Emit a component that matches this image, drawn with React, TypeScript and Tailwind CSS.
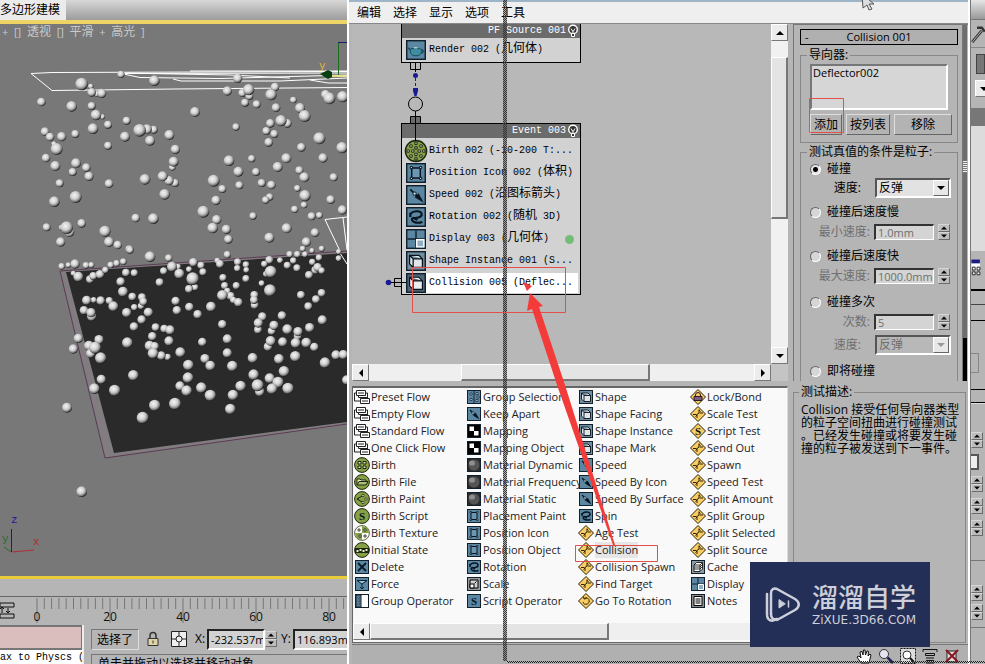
import React, { ReactNode } from 'react'

type Ball = [number, number, number]

// x, y, radius in thirds of a pixel, measured from the top of the scene
const upperBalls: Ball[] = [
  [363, 223, 11], [463, 242, 16], [272, 259, 8], [245, 252, 19], [290, 282, 9], [275, 277, 13], [305, 280, 14],
  [124, 306, 13], [215, 319, 16], [275, 318, 12], [307, 350, 8], [288, 345, 16], [324, 374, 12], [380, 362, 12],
  [279, 386, 16], [135, 395, 13], [150, 411, 13], [185, 410, 14], [226, 402, 12], [162, 432, 8], [170, 447, 18],
  [138, 474, 13], [166, 498, 15], [324, 437, 12], [375, 410, 15], [461, 389, 12], [441, 388, 15], [419, 391, 19],
  [450, 422, 15], [508, 405, 15], [526, 448, 14], [517, 502, 10], [521, 485, 15], [228, 490, 15], [259, 503, 13],
  [218, 516, 12], [267, 529, 14], [179, 550, 12], [327, 551, 13], [435, 538, 16], [525, 549, 12], [507, 542, 14],
  [488, 529, 15], [494, 583, 16], [163, 605, 16], [227, 591, 18], [407, 654, 13], [460, 656, 16], [140, 682, 12],
  [245, 670, 13], [208, 696, 15], [185, 683, 9], [200, 683, 19], [182, 726, 14], [315, 694, 17], [327, 726, 15],
  [353, 735, 13], [388, 748, 12], [585, 336, 15], [713, 235, 14], [682, 273, 14], [727, 279, 12], [748, 288, 12],
  [746, 269, 17], [735, 308, 12], [770, 313, 12], [825, 261, 13], [813, 284, 17], [828, 323, 13], [880, 300, 10],
  [900, 324, 15], [914, 348, 18], [977, 284, 14], [988, 295, 18], [1028, 290, 17], [708, 381, 11], [811, 370, 13],
  [862, 370, 13], [843, 362, 17], [799, 393, 12], [823, 402, 12], [806, 427, 13], [958, 415, 18], [904, 442, 13],
  [1026, 443, 17], [969, 474, 14], [859, 475, 15], [833, 501, 15], [755, 476, 11], [687, 482, 16], [715, 515, 15],
  [768, 516, 12], [718, 556, 12], [785, 549, 12], [814, 555, 13], [898, 511, 12], [913, 532, 15], [1001, 532, 12],
  [892, 565, 10], [641, 542, 18], [667, 567, 12], [648, 601, 14], [915, 587, 17], [992, 599, 13], [809, 591, 11],
  [797, 600, 11], [912, 615, 10], [884, 628, 11], [1027, 630, 14], [610, 635, 18], [650, 659, 14], [638, 684, 16],
  [679, 688, 14], [685, 718, 13], [759, 648, 11], [935, 649, 12], [958, 646, 10], [860, 685, 15], [808, 713, 15],
  [945, 698, 13], [919, 726, 14], [908, 746, 9], [965, 746, 9]
]

// same units, measured from 250px lower
const lowerBalls: Ball[] = [
  [185, 49, 10], [205, 45, 8], [225, 42, 14], [258, 46, 10], [274, 45, 9], [220, 70, 8], [235, 80, 15],
  [270, 88, 12], [280, 78, 12], [300, 73, 13], [316, 60, 10], [332, 45, 10], [350, 40, 10], [370, 35, 10],
  [378, 68, 12], [403, 69, 11], [362, 95, 13], [369, 125, 15], [397, 140, 12], [426, 142, 12], [423, 168, 10],
  [430, 155, 12], [403, 172, 10], [380, 188, 14], [445, 187, 14], [425, 209, 13], [402, 230, 13], [281, 150, 9],
  [260, 151, 14], [302, 152, 13], [328, 152, 11], [340, 169, 15], [252, 181, 13], [275, 199, 14], [273, 188, 14],
  [235, 265, 14], [220, 297, 14], [297, 269, 14], [267, 287, 15], [272, 310, 14], [285, 293, 18], [302, 324, 17],
  [382, 278, 16], [304, 388, 14], [283, 416, 16], [344, 421, 17], [400, 376, 16], [201, 473, 15], [245, 725, 16],
  [450, 20, 16], [390, 0, 11], [506, 24, 11], [479, 97, 12], [491, 63, 11], [534, 50, 9], [516, 50, 15],
  [538, 71, 15], [567, 58, 9], [580, 37, 13], [603, 46, 11], [609, 66, 11], [585, 112, 10], [567, 117, 12],
  [578, 86, 19], [527, 153, 13], [531, 181, 13], [568, 171, 13], [593, 193, 13], [633, 170, 15], [467, 232, 12],
  [493, 236, 12], [510, 240, 14], [457, 259, 13], [449, 287, 15], [464, 289, 13], [507, 273, 14], [503, 321, 10],
  [484, 317, 13], [459, 310, 16], [541, 307, 15], [607, 276, 13], [565, 345, 16], [615, 326, 14], [631, 347, 15],
  [564, 383, 16], [540, 408, 14], [560, 422, 16], [604, 413, 16], [631, 436, 17], [464, 466, 17], [525, 461, 18],
  [428, 503, 18], [682, 14, 11], [652, 32, 9], [660, 42, 12], [669, 83, 11], [674, 107, 11], [709, 107, 11],
  [713, 36, 11], [712, 55, 10], [738, 44, 10], [739, 60, 9], [738, 86, 11], [682, 123, 10], [692, 138, 12],
  [667, 136, 16], [700, 150, 10], [715, 157, 13], [763, 135, 12], [764, 165, 12], [762, 150, 12], [667, 223, 13],
  [682, 267, 14], [682, 309, 14], [697, 348, 16], [758, 324, 15], [722, 408, 16], [699, 435, 16], [691, 477, 16],
  [785, 100, 9], [808, 30, 12], [793, 42, 10], [798, 72, 9], [812, 65, 18], [810, 121, 18], [840, 31, 9],
  [862, 46, 11], [869, 13, 10], [892, 13, 10], [880, 32, 10], [891, 54, 11], [915, 13, 9], [936, 2, 8],
  [957, 23, 10], [937, 36, 10], [946, 60, 12], [953, 52, 13], [927, 75, 12], [965, 62, 10], [903, 135, 12],
  [965, 129, 12], [948, 148, 12], [925, 169, 12], [787, 200, 13], [846, 197, 13], [774, 239, 12], [775, 219, 14],
  [815, 243, 12], [822, 226, 14], [862, 238, 15], [893, 258, 12], [894, 245, 14], [929, 233, 14], [967, 210, 14],
  [804, 290, 13], [812, 273, 15], [848, 276, 14], [887, 279, 15], [943, 291, 13], [919, 278, 15], [837, 327, 15],
  [886, 319, 16], [975, 338, 16], [1008, 315, 14], [1030, 314, 14], [1040, 390, 14], [852, 364, 16], [761, 374, 16],
  [809, 385, 15], [834, 397, 17], [779, 425, 14], [773, 406, 18], [816, 416, 16], [864, 415, 17], [1016, 25, 9],
  [1016, 5, 8]
]

const balls: Ball[] = [
  ...upperBalls,
  ...lowerBalls.map(([x, y, r]): Ball => [x, y + 750, r])
]

const operators: [string, string][] = [
  ['flow', 'Preset Flow'],
  ['flow', 'Empty Flow'],
  ['flow', 'Standard Flow'],
  ['flow', 'One Click Flow'],
  ['birth', 'Birth'],
  ['birthFile', 'Birth File'],
  ['birthPaint', 'Birth Paint'],
  ['birthScript', 'Birth Script'],
  ['birthTexture', 'Birth Texture'],
  ['initial', 'Initial State'],
  ['delete', 'Delete'],
  ['force', 'Force'],
  ['group', 'Group Operator'],
  ['groupSel', 'Group Selection'],
  ['speed', 'Keep Apart'],
  ['mapping', 'Mapping'],
  ['mapping', 'Mapping Object'],
  ['material', 'Material Dynamic'],
  ['material', 'Material Frequency'],
  ['material', 'Material Static'],
  ['frame', 'Placement Paint'],
  ['frame', 'Position Icon'],
  ['frame', 'Position Object'],
  ['rotation', 'Rotation'],
  ['scale', 'Scale'],
  ['script', 'Script Operator'],
  ['shape', 'Shape'],
  ['shape', 'Shape Facing'],
  ['shape', 'Shape Instance'],
  ['shape', 'Shape Mark'],
  ['speed', 'Speed'],
  ['speed', 'Speed By Icon'],
  ['speed', 'Speed By Surface'],
  ['rotation', 'Spin'],
  ['test', 'Age Test'],
  ['test', 'Collision'],
  ['test', 'Collision Spawn'],
  ['test', 'Find Target'],
  ['goto', 'Go To Rotation'],
  ['lock', 'Lock/Bond'],
  ['test', 'Scale Test'],
  ['scriptTest', 'Script Test'],
  ['test', 'Send Out'],
  ['test', 'Spawn'],
  ['test', 'Speed Test'],
  ['test', 'Split Amount'],
  ['test', 'Split Group'],
  ['test', 'Split Selected'],
  ['test', 'Split Source'],
  ['cache', 'Cache'],
  ['display', 'Display'],
  ['notes', 'Notes']
]

const eventRows: [string, string][] = [
  ['birthDots', 'Birth 002 (-10-200 T:...'],
  ['frame', 'Position Icon 002 (体积)'],
  ['speed', 'Speed 002 (沿图标箭头)'],
  ['rotation', 'Rotation 002 (随机 3D)'],
  ['display', 'Display 003 (几何体)'],
  ['shape', 'Shape Instance 001 (S...'],
  ['cube', 'Collision 005 (Deflec...']
]

const blue = '#5c87a3'
const green = '#86a046'
const amber = '#f9cd63'

const Square = ({ fill = blue }: { fill?: string }) => (
  <rect x="1.5" y="1.5" width="13" height="13" fill={fill} stroke="#10202c" />
)
const Disc = () => <circle cx="8" cy="8" r="7.4" fill={green} stroke="#1d2610" />
const Diamond = () => <path d="M8 .5 15.5 8 8 15.5.5 8Z" fill={amber} stroke="#2b2208" />
const Letter = () => (
  <text x="8" y="12" textAnchor="middle" fontSize="11" fontWeight="700" fontFamily="Liberation Serif, serif" fill="#0a141c">S</text>
)

const glyphs: Record<string, ReactNode> = {
  flow: (
    <g fill="#fff" stroke="#222">
      <path d="M2.5 1.5h9v5h-9zM6.5 9.5h9v5h-9z" />
      <path d="M4 4h6M8 12h6M2 4H.5v8H6M12 4h1.500v5" fill="none" />
      <path d="M4.500 7v1.500h9" fill="none" />
    </g>
  ),
  birth: (
    <>
      <Disc />
      <path d="M4 4.500h3v2.500H4zM9 4.500h3v2.500H9zM4 9h3v2.500H4zM9 9h3v2.500H9z" fill="#dfe8b8" stroke="#1d2610" />
    </>
  ),
  birthDots: (
    <>
      <Disc />
      <g fill="#fff" stroke="#1d2610" strokeWidth=".8">
        {[[8, 2.5], [4.5, 4.5], [11.5, 4.5], [8, 5.8], [2.500, 8], [5.800, 8], [10.200, 8], [13.500, 8], [4.5, 11.500], [8, 10.300], [11.5, 11.5], [8, 13.500]].map(([x, y]) => (
          <circle key={`${x}-${y}`} cx={x} cy={y} r=".9" />
        ))}
      </g>
    </>
  ),
  birthFile: (
    <>
      <Disc />
      <path d="M3 11V5h3l1 1h5v2" fill="#e8efc8" stroke="#1d2610" />
      <path d="M3 11l2-3.500h9L12 11z" fill="#aebd74" stroke="#1d2610" />
    </>
  ),
  birthPaint: (
    <>
      <Disc />
      <path d="M3 8l5-3M3 8l5 3M3 8h2" stroke="#1d2610" />
      <path d="M8 3.500h2v2H8zM11 7h2v2h-2zM8 10.500h2v2H8z" fill="#fff" stroke="#1d2610" strokeWidth=".7" />
    </>
  ),
  birthScript: <><Disc /><Letter /></>,
  birthTexture: (
    <>
      <circle cx="8" cy="8" r="7.400" fill="#fff" stroke="#55603a" />
      <path d="M8 8V1a7 7 0 0 1 7 7zM8 8v7a7 7 0 0 1-7-7z" fill={green} />
      <path d="M4 4h2v2H4zM10 4h2v2h-2zM5 10h2v2H5zM10 10h2v2h-2z" fill="#fff" stroke="#1d2610" strokeWidth=".8" />
    </>
  ),
  initial: (
    <>
      <Disc />
      <path d="M1 6h14v5H1z" fill="#1d2610" />
      <path d="M2.500 8h2v2h-2zM5.500 7h2v2h-2zM8.500 8h2v2h-2zM11.500 7h2v2h-2z" fill="#e8efc8" />
    </>
  ),
  delete: <><Square /><path d="M4 4l8 8M12 4l-8 8" stroke="#081825" strokeWidth="1.800" /></>,
  force: (
    <>
      <Square />
      <path d="M3 4.500h10L8 8z" fill="#9cc3d8" stroke="#0d2230" />
      <path d="M8 8v5M6 11l2 2 2-2" fill="none" stroke="#0d2230" />
    </>
  ),
  group: (
    <>
      <Square fill="#fff" />
      <path d="M2 2h5v12H2z" fill={blue} stroke="#10202c" />
      <path d="M4 4h1.500v1.500H4zM4 7h1.500v1.500H4zM4 10h1.500v1.500H4z" fill="#fff" stroke="#10202c" strokeWidth=".6" />
    </>
  ),
  groupSel: (
    <>
      <Square />
      <path d="M8 2v12" stroke="#10202c" />
      <path d="M4 4h2v2H4zM4 9.500h2v2H4zM10 3.500h2v2h-2zM11 7h2v2h-2zM10 10.500h2v2h-2z" fill="#c9dde8" stroke="#10202c" strokeWidth=".7" />
    </>
  ),
  speed: (
    <>
      <Square />
      <path d="M4 4l7 7" stroke="#071520" strokeWidth="1.200" />
      <path d="M7 9.500l6.500 4L9.800 6.800z" fill="#071520" />
      <path d="M6 6h2v2H6z" fill="#e8f0f4" stroke="#071520" strokeWidth=".6" />
    </>
  ),
  mapping: <><Square fill="#000" /><path d="M3.500 3.500H8V8h4.500v4.500H8V8H3.500z" fill="#fff" /></>,
  material: (
    <>
      <Square fill="#2b2b2b" />
      <circle cx="8" cy="8" r="5.500" fill="#555" />
      <ellipse cx="6" cy="6" rx="3" ry="2.600" fill="#8f8f8f" />
    </>
  ),
  frame: (
    <>
      <Square />
      <path d="M5 4.500h6v7H5z" fill="#6c97b2" stroke="#071520" />
      <path d="M4 3.500h1.500V5H4zM10.500 3.500H12V5h-1.500zM4 11h1.500v1.500H4zM10.500 11H12v1.500h-1.500z" fill="#dfeaf0" stroke="#071520" strokeWidth=".7" />
    </>
  ),
  rotation: (
    <>
      <Square />
      <path d="M4 6.500C5 3.500 11.500 3 12 6c.3 2.500-4.500 3-6.500 2.500M4 5v3M5.500 8.500C4 11 8 13 12.500 11.500M6 8.500l3 1.500" fill="none" stroke="#071520" strokeWidth="1.500" />
    </>
  ),
  scale: (
    <>
      <Square fill="#9a9a9a" />
      <path d="M4 4h8v8H4z" fill="#d0d0d0" stroke="#000" />
      <path d="M4 8h4v4H4z" fill="#fff" stroke="#000" />
      <path d="M8.500 7.500l2-2" stroke="#000" />
    </>
  ),
  script: <><Square /><Letter /></>,
  shape: (
    <>
      <Square fill="#6f8ea2" />
      <path d="M6 6.500h6.500v6H6zM6 6.500L3.500 4v6L6 12.500M3.500 4H10l2.500 2.500" fill="#dfe6ea" stroke="#081018" strokeWidth=".9" strokeLinejoin="round" />
    </>
  ),
  cube: (
    <>
      <Square fill="#4d6676" />
      <path d="M6 6.500h6.500v6H6zM6 6.500L3.500 4v6L6 12.500M3.500 4H10l2.500 2.500" fill="#e9eef0" stroke="#081018" strokeWidth=".8" strokeLinejoin="round" />
    </>
  ),
  test: (
    <>
      <Diamond />
      <path d="M3 8.500h3.500M9.500 7H13M9 3.500v3.500M7 8.500V12" stroke="#2b2208" fill="none" />
      <path d="M9 4l1.500 1.500M7 9l-1.500 1.500M9 7l-2 1.500" stroke="#2b2208" />
    </>
  ),
  scriptTest: <><Diamond /><Letter /></>,
  goto: <><Diamond /><path d="M5 9a3.200 3.200 0 1 0 1.500-3.800M5.500 3.500L6 6l2.500-.5" fill="none" stroke="#2b2208" /></>,
  lock: (
    <>
      <Diamond />
      <path d="M4 7.500h8v4H4z" fill="#7e5f82" stroke="#2b1a2c" />
      <path d="M5.500 7.500V6a2.500 2.500 0 0 1 5 0v1.500" fill="none" stroke="#2b1a2c" />
    </>
  ),
  cache: (
    <>
      <Square fill="#8c9aa4" />
      <path d="M4 6l2.500-2.500h6V10L10 12.500H4z" fill="#fff" stroke="#000" strokeWidth=".8" />
      <path d="M4 8h6l2.500-2.500M4 10h6l2.500-2.500M4 6h6v6M10 6l2.500-2.500" fill="none" stroke="#000" strokeWidth=".8" />
    </>
  ),
  display: (
    <>
      <Square />
      <path d="M8 2v12M2 8h12" stroke="#10202c" />
      <path d="M8.500 8.500h5v5h-5z" fill="#8fb0c4" stroke="#fff" />
    </>
  ),
  notes: (
    <>
      <Square fill="#8c8c8c" />
      <path d="M4 3.500h8v9H4z" fill="#fff" stroke="#000" />
      <path d="M5.500 6h5M5.500 8h5M5.500 10h5" stroke="#000" />
    </>
  ),
  teapot: (
    <>
      <Square />
      <path d="M4.500 7h6c2 0 2 4-1 5h-3.500C4 11 3.500 9 4.500 7z" fill="#3d8ca0" stroke="#1b4a5a" strokeWidth=".7" />
      <path d="M4 8L2.500 6.500M11.500 8c2-.5 2 2 0 2" fill="none" stroke="#1b4a5a" />
      <path d="M6.500 6.500h2.500" stroke="#a9dbe5" />
    </>
  )
}

const Glyph = ({ kind, big }: { kind: string; big?: boolean }) => (
  <svg viewBox={big ? '1 1 14 14' : '0 0 16 16'} className={big ? 'size-5 shrink-0 overflow-visible' : 'size-4 shrink-0'}>
    {glyphs[kind]}
  </svg>
)

// Latin runs sit on a 6px cell, Han characters on a 12px cell
const CellText = ({ children }: { children: string }) => (
  <span className="whitespace-pre font-['Liberation_Mono','Noto_Sans_CJK_SC',monospace] text-[10px]">
    {children.split(/([\u4e00-\u9fff]+)/).map((run, i) =>
      i % 2 ? <span key={i} className="text-xs leading-none">{run}</span> : run
    )}
  </span>
)

const Bulb = () => (
  <svg viewBox="0 0 12 14" className="h-[14px] w-3 shrink-0">
    <circle cx="6" cy="5.500" r="4.300" fill="#333" stroke="#fff" strokeWidth="1.400" />
    <path d="M4.500 9.500h3v3h-3z" fill="#333" stroke="#fff" />
    <path d="M4 4.500L5.500 7h1L8 4.500M6 7v2.500" fill="none" stroke="#fff" />
  </svg>
)

const arrows = {
  up: 'M4 2l4 4H0z',
  down: 'M4 6L0 2h8z',
  left: 'M2 4l4-4v8z',
  right: 'M6 4L2 0v8z'
}

const ArrowButton = ({ dir, label }: { dir: keyof typeof arrows; label: string }) => (
  <button
    type="button"
    aria-label={label}
    className="flex size-[17px] shrink-0 items-center justify-center border border-white border-r-[#777] border-b-[#777] bg-[#ececec]"
  >
    <svg viewBox="0 0 8 8" className="size-2"><path d={arrows[dir]} /></svg>
  </button>
)

const Thumb = ({ className }: { className: string }) => (
  <div className={`border border-white border-r-2 border-b-2 border-r-[#777] border-b-[#777] bg-[#e4e4e4] ${className}`} />
)

const Spinner = () => (
  <span className="flex h-4 w-3 shrink-0 flex-col">
    {(['up', 'down'] as const).map(dir => (
      <button
        key={dir}
        type="button"
        aria-label={dir}
        className="flex h-2 items-center justify-center border border-[#d6d6d6] border-r-[#6b6b6b] border-b-[#6b6b6b] bg-[#bdbdbd]"
      >
        <svg viewBox="0 0 8 8" className="size-[6px]"><path d={arrows[dir]} /></svg>
      </button>
    ))}
  </span>
)

const NumberField = ({ id, label, value }: { id: string; label: string; value: string }) => (
  <div className="flex h-[22px] items-center pr-[7px] text-[#6f6f6f]">
    <label htmlFor={id} className="flex-1 pr-1 text-right">{label}</label>
    <input
      id={id}
      defaultValue={value}
      disabled
      className="h-4 w-[60px] border-2 border-[#333] border-r border-b border-r-white border-b-white bg-[#d4d4d4] pl-[2px] text-[11px]"
    />
    <span className="w-1" />
    <Spinner />
  </div>
)

const SpeedSelect = ({ id, disabled }: { id: string; disabled?: boolean }) => (
  <div className={`flex h-6 items-center pr-[6px] ${disabled ? 'text-[#6f6f6f]' : ''}`}>
    <label htmlFor={id} className="flex-1 pr-[14px] text-right">速度:</label>
    <span className="relative flex">
      <select
        id={id}
        disabled={disabled}
        className={`h-5 w-[76px] appearance-none border-2 border-[#555] border-r-white border-b-white pl-[2px] leading-4 opacity-100 ${disabled ? 'bg-[#b8b8b8]' : 'bg-[#e2e2e2]'}`}
      >
        <option>反弹</option>
      </select>
      <span className="pointer-events-none absolute top-[2px] right-[2px] flex size-4 items-center justify-center border border-white border-r-[#666] border-b-[#666] bg-[#e8e8e8]">
        <svg viewBox="0 0 8 8" className="size-2"><path d={arrows.down} fill={disabled ? '#999' : '#000'} /></svg>
      </span>
    </span>
  </div>
)

const TestRadio = ({ label, checked }: { label: string; checked?: boolean }) => (
  <label className="flex h-[22px] items-center gap-[6px] pl-[9px]">
    <input
      type="radio"
      name="test"
      defaultChecked={checked}
      className="size-[11px] appearance-none rounded-full border border-[#666] border-r-white border-b-white bg-[#d6d6d6] checked:bg-[radial-gradient(circle,#000_0_2px,#e6e6e6_3px)]"
    />
    {label}
  </label>
)

const PushButton = ({ children, className }: { children: ReactNode; className: string }) => (
  <button
    type="button"
    className={`h-[21px] border border-[#dedede] border-r-[#666] border-b-[#666] bg-[#b3b3b3] text-center leading-[19px] whitespace-nowrap ${className}`}
  >
    {children}
  </button>
)

const Viewport = () => (
  <div className="relative min-h-0 flex-1 overflow-hidden border-t-4 border-b-[3px] border-t-[#ecd467] border-b-[#e9cc3a] bg-[#787878]">
    <svg viewBox="0 24 347 553" preserveAspectRatio="xMinYMin slice" className="size-full">
      <defs>
        <radialGradient id="ball" cx=".4" cy=".36" r=".64">
          <stop offset="0" stopColor="#f4f4f4" />
          <stop offset=".5" stopColor="#cfcfcf" />
          <stop offset=".8" stopColor="#808080" />
          <stop offset="1" stopColor="#1c1c1c" />
        </radialGradient>
      </defs>
      <path d="M60 271L347 251V425L105 458z" fill="#817c80" />
      <path d="M66 272L347 253V422L114 453z" fill="#2a2a2a" />
      <path d="M347 251L60 271 105 458 347 424" fill="none" stroke="#5b3a54" />
      <g fill="none" stroke="#fff">
        <path d="M347 71.500L52 72.500 31 73.500 52 90.500 175 89 347 87.500" />
        <path d="M347 73L121 73.500 140 77.500 220 78.500 347 75M190 71L347 71M173 79L181 81 280 81 347 78M310 80L328 83 347 83M121 73L230 75 290 78" />
        <path d="M347 217L325 219.500 340 251M343 218L347 250M338 250L347 264" />
      </g>
      {balls.map(([x, y, r], i) => (
        <circle key={i} cx={x / 3} cy={y / 3} r={r / 3} fill="url(#ball)" />
      ))}
      <path d="M338.500 76V42.500" stroke="#1f6b1f" />
      <path d="M338 42.500h9" stroke="#1b1b70" />
      <path d="M332 76h15" stroke="#e5e08a" strokeWidth="2" />
      <path d="M320 74l8-4 4 2v5l-4 2z" fill="#063f10" />
      <g fontFamily="Liberation Mono, monospace" fontSize="11">
        <text x="319" y="69" fill="#e3b63a">y</text>
        <text x="11" y="523" fill="#191994">z</text>
        <text x="2" y="542" fill="#2e6b2e">y</text>
        <text x="33" y="545" fill="#b22b35">x</text>
      </g>
      <path d="M11.500 529v23" stroke="#191994" />
      <path d="M12 552l22-2" stroke="#b22b35" />
      <path d="M11 552l-7-5" stroke="#2e6b2e" />
    </svg>
    <p className="absolute top-0 left-0 whitespace-pre pl-[2px] text-[11px] leading-4 text-[#c9c9c9]">
      +  []  <span className="text-xs">透视</span>  []  <span className="text-xs">平滑</span>  +  <span className="text-xs">高光</span>  ]
    </p>
  </div>
)

const TimeRuler = () => (
  <svg viewBox="0 0 347 28" preserveAspectRatio="xMinYMin slice" className="w-full border-t border-[#666]">
    {Array.from({ length: 43 }, (_, i) => (
      <path key={i} d={`M${37 + i * 7.3} 1v${i % 10 ? 11 : 25}`} stroke="#777" />
    ))}
    <g fontFamily="Open Sans, sans-serif" fontSize="12" textAnchor="middle" fill="#111">
      {[0, 20, 40, 60, 80].map(n => (
        <text key={n} x={37 + n * 3.65} y="24">{n}</text>
      ))}
    </g>
    <path d="M0 6h14v4H0zM0 17h14v4H0zM2 10v6M8 11v5M6 14l2 2 2-2M0 12l2-2 2 2" fill="none" stroke="#111" />
  </svg>
)

const StatusBar = () => (
  <div className="flex h-[39px] shrink-0 gap-[7px] overflow-hidden">
    <div className="w-[84px] shrink-0 border-r-2 border-[#eee]">
      <div className="h-[23px] border-t-2 border-r border-[#777] bg-[#dabdbd]" />
      <p className="h-4 overflow-hidden border-t-2 border-[#777] bg-white font-['Liberation_Mono',monospace] text-[10px] leading-4 whitespace-nowrap">
        ax to Physcs (
      </p>
    </div>
    <div className="min-w-0 flex-1">
      <div className="flex h-7 items-center">
        <span className="h-[21px] w-12 shrink-0 border border-[#777] border-r-[#ddd] border-b-[#ddd] text-center text-xs leading-[19px]">选择了</span>
        <svg viewBox="0 0 12 16" className="ml-2 h-4 w-3 shrink-0">
          <path d="M3 8V4.500a3 3 0 0 1 6 0V8" fill="none" stroke="#333" strokeWidth="1.500" />
          <path d="M1 7.500h10v7H1z" fill="#e0d3a5" stroke="#333" />
          <path d="M6 9.500v3" stroke="#333" />
        </svg>
        <svg viewBox="0 0 16 16" className="ml-3 size-4 shrink-0">
          <path d="M.5.5h15v15H.5z" fill="#eee" stroke="#222" />
          <circle cx="8" cy="8" r="3" fill="none" stroke="#222" />
          <path d="M8 0v5M8 11v5M0 8h5M11 8h5" stroke="#222" />
        </svg>
        <label htmlFor="pos-x" className="ml-2 w-3 shrink-0">X:</label>
        <input id="pos-x" defaultValue="-232.537m" className="h-[21px] w-[58px] shrink-0 border-2 border-[#222] border-r-white border-b-white bg-[#d2d2d2] pl-[2px] text-[11px]" />
        <Spinner />
        <label htmlFor="pos-y" className="ml-1 w-3 shrink-0">Y:</label>
        <input id="pos-y" defaultValue="116.893mm" className="h-[21px] w-14 shrink-0 border-2 border-[#222] border-r-white border-b-white bg-[#d2d2d2] pl-[2px] text-[11px]" />
      </div>
      <p className="mt-px border-t border-l border-[#777] pt-[2px] pl-[6px] text-xs leading-[14px] whitespace-nowrap">单击并拖动以选择并移动对象</p>
    </div>
  </div>
)

const NodeHeader = ({ title }: { title: string }) => (
  <div className="flex h-[14px] items-center justify-end gap-px bg-[#6b6b6b] pr-px text-white">
    <CellText>{title}</CellText>
    <Bulb />
  </div>
)

const Canvas = () => (
  <div className="relative min-h-0 min-w-0 overflow-hidden bg-[#b8b8b8]">
    <div className="absolute top-0 left-[49px] w-[180px] border border-t-0 border-black bg-[#d2d2d2]">
      <NodeHeader title="PF Source 001" />
      <div className="flex h-6 items-center gap-[3px] pl-1">
        <Glyph kind="teapot" big />
        <CellText>Render 002 (几何体)</CellText>
      </div>
    </div>
    <div className="absolute top-[99px] left-[49px] w-[180px] border border-black bg-[#d2d2d2]">
      <NodeHeader title="Event 003" />
      <ul className="pt-[2px]">
        {eventRows.map(([kind, text]) => (
          <li key={text} className="flex h-[22px] items-center pl-1">
            <Glyph kind={kind} big />
            <span className={`mr-[2px] flex h-5 flex-1 items-center overflow-hidden pl-[3px] ${kind === 'cube' ? 'bg-white' : ''}`}>
              <CellText>{text}</CellText>
              {kind === 'display' && <i className="ml-4 size-[9px] rounded-full bg-[#74bd78]" />}
            </span>
          </li>
        ))}
      </ul>
    </div>
    <svg className="pointer-events-none absolute top-0 left-0 h-[280px] w-[240px]" fill="none" stroke="#000">
      <path d="M58.500 38.500h10v7h-10zM63.500 38v10" />
      <path d="M58.500 92.500h10v7h-10z" fill="#6b6b6b" />
      <path d="M63.500 87v30" />
      <circle cx="63.500" cy="80" r="7" />
      <path d="M63.500 54v12" stroke="#1b1b90" strokeDasharray="3 2" />
      <circle cx="63.500" cy="51.500" r="2.500" fill="#1b1b90" stroke="none" />
      <path d="M61 64h5v3l-1.500 5h-2L61 67z" fill="#1b1b90" stroke="none" />
      <circle cx="36.500" cy="258.500" r="2.800" fill="#1b1b90" stroke="none" />
      <path d="M39 258.500h15M42.500 254.500h7v8h-7z" />
    </svg>
  </div>
)

const menus = ['编辑', '选择', '显示', '选项', '工具']

const description = [
  'Collision 接受任何导向器类型',
  '的粒子空间扭曲进行碰撞测试',
  '。已经发生碰撞或将要发生碰',
  '撞的粒子被发送到下一事件。'
]

const Parameters = () => (
  <div className="flex min-h-0 overflow-hidden border-t border-l border-[#777] pl-[6px]">
    <div className="min-w-0 flex-1 pt-1">
      <button type="button" className="relative block h-4 w-full border border-black bg-[#b0b0b0] text-center text-[11px] leading-[14px]">
        <span className="absolute left-1">-</span>
        Collision 001
      </button>
      <fieldset className="mt-1 h-[94px] border border-[#888] px-[9px]">
        <legend className="-ml-[3px] px-[2px] leading-3">导向器:</legend>
        <div className="mt-[3px] h-[46px] border-2 border-[#777] border-r-white border-b-white bg-[#d6d6d6] pl-px text-[11px] leading-[14px]">Deflector002</div>
        <div className="mt-1 -mr-1 flex gap-1">
          <PushButton className="w-8">添加</PushButton>
          <PushButton className="w-11">按列表</PushButton>
          <PushButton className="min-w-0 flex-1">移除</PushButton>
        </div>
      </fieldset>
      <fieldset className="mt-[3px] h-[250px] border border-b-0 border-[#888]">
        <legend className="ml-[6px] px-[2px] leading-3">测试真值的条件是粒子:</legend>
        <TestRadio label="碰撞" checked />
        <div className="-mt-1 mb-px"><SpeedSelect id="speed-a" /></div>
        <TestRadio label="碰撞后速度慢" />
        <div className="-my-[2px] pb-1"><NumberField id="min-speed" label="最小速度:" value="1.0mm" /></div>
        <TestRadio label="碰撞后速度快" />
        <div className="-my-[2px] pb-[6px]"><NumberField id="max-speed" label="最大速度:" value="1000.0mm" /></div>
        <TestRadio label="碰撞多次" />
        <div className="-mt-[2px]"><NumberField id="count" label="次数:" value="5" /></div>
        <div className="mb-[3px]"><SpeedSelect id="speed-b" disabled /></div>
        <TestRadio label="即将碰撞" />
      </fieldset>
    </div>
    <div className="ml-1 flex w-[5px] flex-col border-l border-[#777]">
      <div className="flex-[287] bg-[#6e6e6e] pt-[136px]">
        <div className="h-3 bg-[repeating-linear-gradient(#eee_0_1px,#777_1px_2px)]" />
      </div>
      <div className="flex-[70] bg-black" />
    </div>
    <div className="w-px" />
  </div>
)

const ParticleWindow = () => (
  <div className="relative flex min-h-0 min-w-0 flex-col border-l-2 border-r-2 border-white bg-[#b5b5b5]">
    <div className="h-[2px] shrink-0 bg-[#9db5c6]" />
    <nav className="flex h-[21px] shrink-0 gap-3 bg-[#efefef] pl-2 text-xs leading-5">
      {menus.map(name => (
        <button key={name} type="button">{name}</button>
      ))}
    </nav>
    <div className="grid min-h-0 flex-1 grid-cols-[minmax(0,436fr)_minmax(0,175fr)] grid-rows-[minmax(0,357fr)_minmax(0,263fr)_20px] gap-x-[5px] border-t border-[#888] pl-[3px]">
      <div className="grid min-h-0 grid-cols-[minmax(0,1fr)_17px] grid-rows-[minmax(0,1fr)_17px]">
        <Canvas />
        <div className="flex min-h-0 flex-col bg-[#f1f1f1]">
          <ArrowButton dir="up" label="向上滚动" />
          <div className="min-h-0 flex-1 pt-4"><Thumb className="h-[56%]" /></div>
          <ArrowButton dir="down" label="向下滚动" />
        </div>
        <div className="flex bg-[#efefef]">
          <ArrowButton dir="left" label="向左滚动" />
          <div className="flex flex-1"><Thumb className="ml-[24%] w-[49%]" /></div>
          <ArrowButton dir="right" label="向右滚动" />
        </div>
        <div className="bg-[#c4c4c4]" />
      </div>
      <Parameters />

      <div className="mt-[5px] mb-px flex min-h-0 flex-col border border-t-2 border-[#666] border-r-[#ddd] bg-[#f9f9f9] pb-[2px]">
        <ul className="grid min-h-0 flex-1 grid-flow-col grid-cols-[112fr_112fr_112fr_98fr] grid-rows-[repeat(13,17px)] content-start overflow-hidden">
          {operators.map(([kind, name]) => (
            <li key={name} className="flex min-w-0 items-center gap-px pl-px text-[11px] leading-4 whitespace-nowrap text-[#222]">
              <Glyph kind={kind} />
              <span className={name === 'Collision' ? 'bg-[#e6e6e6]' : ''}>{name}</span>
            </li>
          ))}
        </ul>
        <div className="flex shrink-0 bg-[#efefef]">
          <ArrowButton dir="left" label="向左滚动" />
          <Thumb className="w-[55%]" />
        </div>
      </div>
      <fieldset className="mr-[2px] mb-px min-h-0 border border-[#888] pl-[7px]">
        <legend className="-ml-[2px] px-[2px] leading-[22px]">测试描述:</legend>
        {description.map(line => (
          <p key={line} className="leading-[13px] whitespace-nowrap">{line}</p>
        ))}
      </fieldset>

      <div className="col-span-2 flex items-end justify-end gap-[6px] border-t border-[#777] bg-[#b0b0b0] pr-2">
        <ToolIcons />
      </div>
    </div>
  </div>
)

const ToolIcons = () => (
  <>
    <svg viewBox="0 0 16 16" className="size-4">
      <path d="M5 15L1 9l2-1 2 2-1-6 2-.5L7 7l.5-5H9l.5 5L11 3l1.500.5L12 8l2-2 1 1-2 8z" fill="#fff" stroke="#111" />
    </svg>
    <svg viewBox="0 0 16 16" className="size-4">
      <circle cx="6" cy="6" r="4.500" fill="#e5e5f2" stroke="#333" />
      <path d="M9.500 9.500L15 15" stroke="#22225a" strokeWidth="2.500" />
    </svg>
    <svg viewBox="0 0 16 16" className="size-4">
      <path d="M.5.500h15v15H.5z" fill="#ddd" stroke="#111" strokeDasharray="2 1" />
      <circle cx="7" cy="7" r="4" fill="#fff" stroke="#333" />
      <path d="M10 10l4 4" stroke="#111" strokeWidth="2" />
    </svg>
    <svg viewBox="0 0 16 16" className="size-4">
      <path d="M1 4V1.500h14V4M3.500 5.500h9v2h-9zM4 10h8M4 12.500h8M4 15h8" fill="none" stroke="#111" />
    </svg>
    <svg viewBox="0 0 16 16" className="size-4">
      <path d="M3 3h9v11H3z" fill="#ddd" stroke="#222" />
      <path d="M2 2l12 12M14 2L2 14" stroke="#8c1420" strokeWidth="2" />
    </svg>
  </>
)

const CommandPanel = () => (
  <div className="flex min-h-0 min-w-0 flex-col overflow-hidden border-l border-[#777] bg-[#b5b5b5]">
    <div className="h-5 shrink-0 border-b border-[#777] bg-linear-to-b from-[#e6e6e6] to-[#999]" />
    <svg viewBox="0 0 14 28" className="h-7 w-full shrink-0 border-b border-[#888]">
      <path d="M1 23L11 11" stroke="#333" strokeWidth="3" />
      <path d="M1 23L11 11" stroke="#bbb" />
      <path d="M6 8h5l3 4" fill="none" stroke="#333" strokeWidth="2.500" />
    </svg>
    <div className="mt-[6px] ml-[5px] h-5 shrink-0 border border-[#444] bg-[#777]" />
    <div className="mt-[6px] ml-1 flex h-6 shrink-0"><ArrowButton dir="down" label="展开" /></div>
    <div className="mt-1 h-[18px] shrink-0 bg-[#777]" />
    <div className="h-[125px] shrink-0 bg-[#dcdcdc]" />
    <svg viewBox="0 0 14 40" className="h-10 w-full shrink-0 border-b-2 border-black">
      <path d="M0 10h9v10H0z" fill="#fff" />
      <path d="M0 9h9v4H0z" fill="#1b1b80" />
      <path d="M1 17h3v3H1zM6 17h3v3H6zM1 22h3v3H1zM6 22h3v3H6z" fill="#fff" stroke="#222" />
    </svg>
    <div className="h-[14px] shrink-0 border-b border-[#444]" />
    <div className="h-4 shrink-0 border-b border-black" />
    <div className="mt-8 h-5 w-2 shrink-0 border border-l-0 border-[#888]" />
    <div className="mt-4 h-[14px] shrink-0 border-y border-black" />
    <div className="flex flex-1 flex-col gap-[6px] border-t border-[#ddd] pt-7">
      <Spinner />
      <span className="h-4 w-2 border-2 border-l-0 border-[#555] bg-[#eee]" />
      <Spinner />
      <Spinner />
      <Spinner />
    </div>
    <div className="flex h-[104px] shrink-0 flex-col gap-[3px] border-t border-[#777] pt-6">
      <Spinner />
      <Spinner />
      <span className="mt-1 border-t border-[#777]" />
    </div>
  </div>
)

const Watermark = () => (
  <div className="absolute top-[562px] left-[750px] flex h-[85px] w-[180px] items-center gap-[11px] bg-[#232f56] pl-[15px] text-[#cdd0da]">
    <svg viewBox="0 0 36 36" className="size-9 shrink-0" fill="none" stroke="#cdd0da" strokeWidth="2.500" strokeLinecap="round" strokeLinejoin="round">
      <path d="M2 7v20c0 7 5 8 10 5" />
      <path d="M6 27V6c0-4 3-5 6-4l18 10c5 3 5 8 0 11L12 33" />
      <path d="M12 32c-4 1-6-1-6-5" />
      <path d="M14 13v8l6-4z" fill="#cdd0da" strokeWidth="1" />
      <path d="M23.500 14v6" strokeWidth="1.500" />
    </svg>
    <div>
      <p className="text-[26px] leading-[30px] font-medium">溜溜自学</p>
      <p className="font-['DejaVu_Sans',sans-serif] text-xs leading-4">ZiXUE.3D66.COM</p>
    </div>
  </div>
)

const Annotations = () => (
  <svg className="pointer-events-none absolute top-0 left-0 h-full w-full" fill="none" stroke="#e2504c">
    <defs>
      <pattern id="dots" width="2" height="2" patternUnits="userSpaceOnUse">
        <path d="M0 0h1v1H0zM1 1h1v1H1z" fill="#222" stroke="none" />
      </pattern>
    </defs>
    <path d="M503 0h4v661h-4zM507 661h478v2H507z" fill="url(#dots)" stroke="none" />
    <path d="M503 0h4v661h-4z" fill="#555" fillOpacity=".45" stroke="none" />
    <path d="M412.500 267.500h153v45h-153zM809.500 98.500h34v34h-34zM575.500 545.500h82v16h-82z" />
    <path d="M530 293l13 13-4 1 26 78 50 160h-2L557 385l-25-76-5 2z" fill="#f33c39" stroke="none" />
    <path d="M523 282l9 4-5 5z" fill="#f33c39" stroke="none" />
    <path d="M862 -6l12 10-5 0 3 5-3 1-2-5-4 3z" fill="#ddd" stroke="#555" />
  </svg>
)

export default function App() {
  return (
    <main className="relative grid h-screen grid-cols-[minmax(0,347fr)_minmax(0,623fr)_minmax(0,15fr)] overflow-hidden bg-[#b5b5b5] font-['Open_Sans','Noto_Sans_CJK_SC',sans-serif] text-xs text-black">
      <section className="flex min-h-0 min-w-0 flex-col overflow-hidden">
        <div className="flex h-5 shrink-0 bg-linear-to-b from-[#d8d8d8] to-[#9c9c9c]">
          <span className="w-[66px] bg-[#ebebeb] leading-5 whitespace-nowrap">多边形建模</span>
        </div>
        <Viewport />
        <div className="h-[17px] shrink-0" />
        <TimeRuler />
        <StatusBar />
      </section>
      <ParticleWindow />
      <CommandPanel />
      <Annotations />
      <Watermark />
    </main>
  )
}
